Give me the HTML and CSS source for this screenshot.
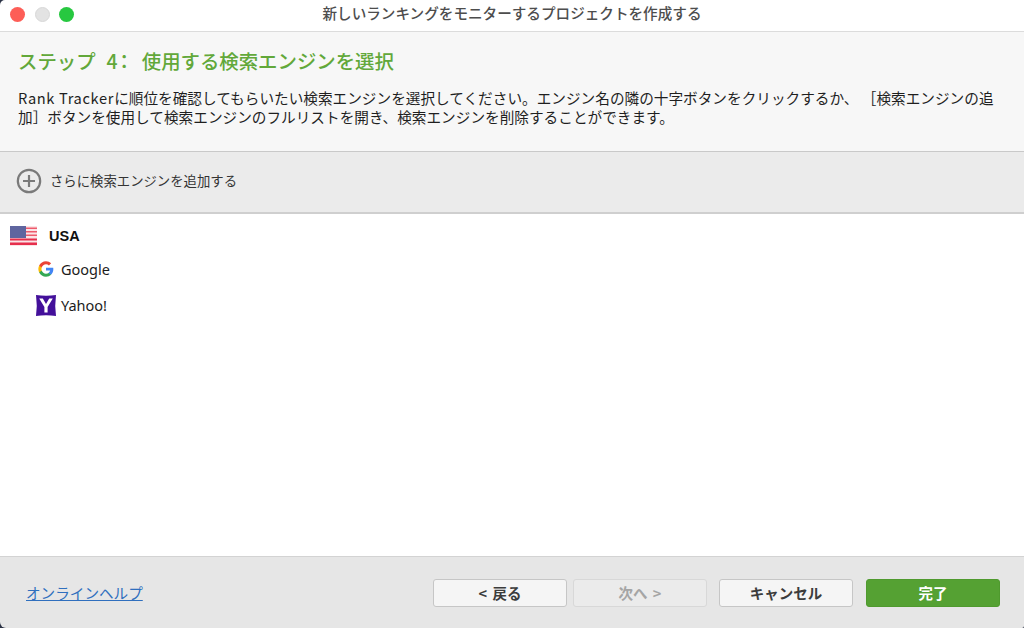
FILE: index.html
```html
<!DOCTYPE html>
<html lang="ja">
<head>
<meta charset="utf-8">
<title>新しいランキングをモニターするプロジェクトを作成する</title>
<link rel="stylesheet" href="styles.css">
</head>
<body>
<div class="window">
  <header class="titlebar">
    <div class="lights">
      <span class="light red"></span>
      <span class="light gray"></span>
      <span class="light green"></span>
    </div>
    <div class="title">新しいランキングをモニターするプロジェクトを作成する</div>
  </header>
  <section class="intro">
    <h1 class="step">ステップ <span class="step-no">4：</span> 使用する検索エンジンを選択</h1>
    <p class="desc"><span class="latin">Rank Tracker</span>に順位を確認してもらいたい検索エンジンを選択してください。エンジン名の隣の十字ボタンをクリックするか、 ［検索エンジンの追<br>加］ボタンを使用して検索エンジンのフルリストを開き、検索エンジンを削除することができます。</p>
  </section>
  <section class="toolbar">
    <svg class="plus" width="26" height="26" viewBox="0 0 26 26" aria-hidden="true">
      <circle cx="13" cy="13" r="11.200" fill="none" stroke="#7a7a7a" stroke-width="2.200"/>
      <path d="M13 7v12M7 13h12" fill="none" stroke="#7a7a7a" stroke-width="2.200"/>
    </svg>
    <span class="add">さらに検索エンジンを追加する</span>
  </section>
  <main class="list">
    <div class="country">
      <svg class="flag" width="27" height="20" viewBox="0 0 27 20" aria-hidden="true">
        <rect width="27" height="20" fill="#fbe4e6"/>
        <g fill="#ee5a6c">
          <rect y="1.500" width="27" height="1.500"/>
          <rect y="5" width="27" height="1.500"/>
          <rect y="8.500" width="27" height="1.500"/>
        </g>
        <g fill="#e62f4c">
          <rect y="12.500" width="27" height="2"/>
          <rect y="16.500" width="27" height="2.500"/>
        </g>
        <rect width="16" height="12" fill="#5f659f"/>
      </svg>
      <span class="country-name">USA</span>
    </div>
    <div class="engine">
      <span class="engine-icon">
        <svg width="16" height="16" viewBox="0 0 48 48" aria-hidden="true">
          <path fill="#4285f4" d="M46 24.500c0-1.600-.14-3.100-.4-4.500H24v8.500h12.400c-.54 2.800-2.100 5.200-4.600 6.800v5.600h7.400C43.500 36.900 46 31.200 46 24.500z"/>
          <path fill="#34a853" d="M24 47c6.200 0 11.400-2 15.200-5.600l-7.400-5.600c-2 1.400-4.700 2.200-7.800 2.200-6 0-11.100-4-12.900-9.500H3.500v5.800C7.300 41.800 15 47 24 47z"/>
          <path fill="#fbbc05" d="M11.100 28.500c-.5-1.400-.7-2.900-.7-4.500s.3-3.100.7-4.500v-5.800H3.500C2 16.800 1 20.300 1 24s1 7.200 2.500 10.300z"/>
          <path fill="#ea4335" d="M24 10c3.400 0 6.400 1.200 8.800 3.400l6.600-6.600C35.400 3.200 30.200 1 24 1 15 1 7.300 6.200 3.500 13.700l7.600 5.800C12.900 14 18 10 24 10z"/>
        </svg>
      </span>
      <span class="engine-name">Google</span>
    </div>
    <div class="engine">
      <span class="engine-icon">
        <svg width="20" height="21" viewBox="0 0 20 21" aria-hidden="true">
          <path fill="#43109a" d="M0 0Q10 1.500 20 0Q18.500 10.500 20 21Q10 19.500 0 21Q1.500 10.500 0 0z"/>
          <path fill="#fff" d="M3.200 3.500h3.600l3.200 5.600 3.200-5.600h3.600l-5.200 8.400v5.600H8.400v-5.600z"/>
        </svg>
      </span>
      <span class="engine-name">Yahoo!</span>
    </div>
  </main>
  <footer class="footer">
    <a class="help" href="#">オンラインヘルプ</a>
    <div class="buttons">
      <div class="nav">
        <button class="btn" type="button">&lt; 戻る</button>
        <button class="btn disabled" type="button">次へ &gt;</button>
      </div>
      <button class="btn" type="button">キャンセル</button>
      <button class="btn primary" type="button">完了</button>
    </div>
  </footer>
</div>
</body>
</html>
```
FILE: styles.css
```css
* { box-sizing: border-box; }
html, body { margin: 0; padding: 0; }
body {
  width: 1024px;
  height: 628px;
  overflow: hidden;
  background: #2b3245;
  font-family: "Noto Sans CJK JP", "Noto Sans", sans-serif;
  color: #1c1c1c;
}
.window {
  display: flex;
  flex-direction: column;
  height: 628px;
  overflow: hidden;
  border-radius: 5px 0 2px 6px;
}
.titlebar {
  height: 32px;
  flex: none;
  display: flex;
  align-items: center;
  justify-content: center;
  padding-bottom: 7px;
  position: relative;
  background: #fff;
  border-bottom: 1px solid #dcdcdc;
}
.lights {
  position: absolute;
  left: 10px;
  top: 7px;
  display: flex;
  gap: 9.500px;
}
.light {
  width: 15px;
  height: 15px;
  border-radius: 50%;
}
.red { background: #fd5e57; }
.gray { background: #e3e3e3; border: 1px solid #d8d8d8; }
.green { background: #27c840; }
.title {
  font-size: 14.600px;
  font-weight: 500;
  color: #4d4d4d;
}
.intro {
  height: 120px;
  flex: none;
  padding: 16px 18px 0;
  background: #f7f7f7;
  border-bottom: 1px solid #c9c9c9;
}
.step {
  margin: 0;
  font-size: 19.400px;
  line-height: 26px;
  font-weight: 500;
  word-spacing: 6.500px;
  color: #62a83a;
}
.step-no { letter-spacing: -3px; }
.desc {
  margin: 14px 0 0;
  font-size: 14.650px;
  line-height: 19px;
  white-space: nowrap;
  color: #1f1f1f;
}
.latin { letter-spacing: 0.650px; }
.toolbar {
  height: 62px;
  flex: none;
  display: flex;
  align-items: center;
  gap: 8px;
  padding: 0 0 2px 16px;
  background: #ebebeb;
  border-bottom: 2px solid #cfcfcf;
}
.plus { flex: none; }
.add {
  padding-bottom: 2px;
  font-size: 13.360px;
  color: #333;
}
.list {
  flex: 1;
  padding-top: 12px;
  background: #fff;
}
.country {
  display: flex;
  align-items: center;
  height: 20px;
  padding-left: 10px;
  gap: 12px;
}
.country-name {
  font-family: "Liberation Sans", sans-serif;
  font-weight: 700;
  font-size: 14.500px;
  color: #111;
}
.engine {
  display: flex;
  align-items: center;
  height: 20px;
  margin-top: 16px;
  padding-left: 36px;
}
.country + .engine { margin-top: 13px; }
.engine-icon {
  width: 25px;
  display: flex;
  justify-content: center;
  padding-right: 5px;
}
.engine-name {
  font-family: "Noto Sans", sans-serif;
  font-size: 14.500px;
  color: #1c1c1c;
}
.footer {
  height: 72px;
  flex: none;
  display: flex;
  align-items: center;
  justify-content: space-between;
  padding: 0 24px 0 26px;
  background: #e6e6e6;
  border-top: 1px solid #d3d3d3;
}
.help {
  font-size: 14.600px;
  color: #2f6fbe;
  text-decoration: underline;
}
.buttons {
  display: flex;
  gap: 12px;
}
.nav {
  display: flex;
  gap: 6px;
}
.btn {
  width: 134px;
  height: 28px;
  padding: 0;
  font-family: inherit;
  font-size: 14.500px;
  font-weight: 700;
  word-spacing: 2px;
  color: #3c3c3c;
  background: #f5f5f5;
  border: 1px solid #c6c6c6;
  border-radius: 3px;
}
.btn.disabled {
  color: #a5a5a5;
  background: #ebebeb;
  border-color: #d8d8d8;
}
.btn.primary {
  margin-left: 1px;
  color: #fff;
  background: #55a133;
  border-color: #4f9a2e;
}
```
